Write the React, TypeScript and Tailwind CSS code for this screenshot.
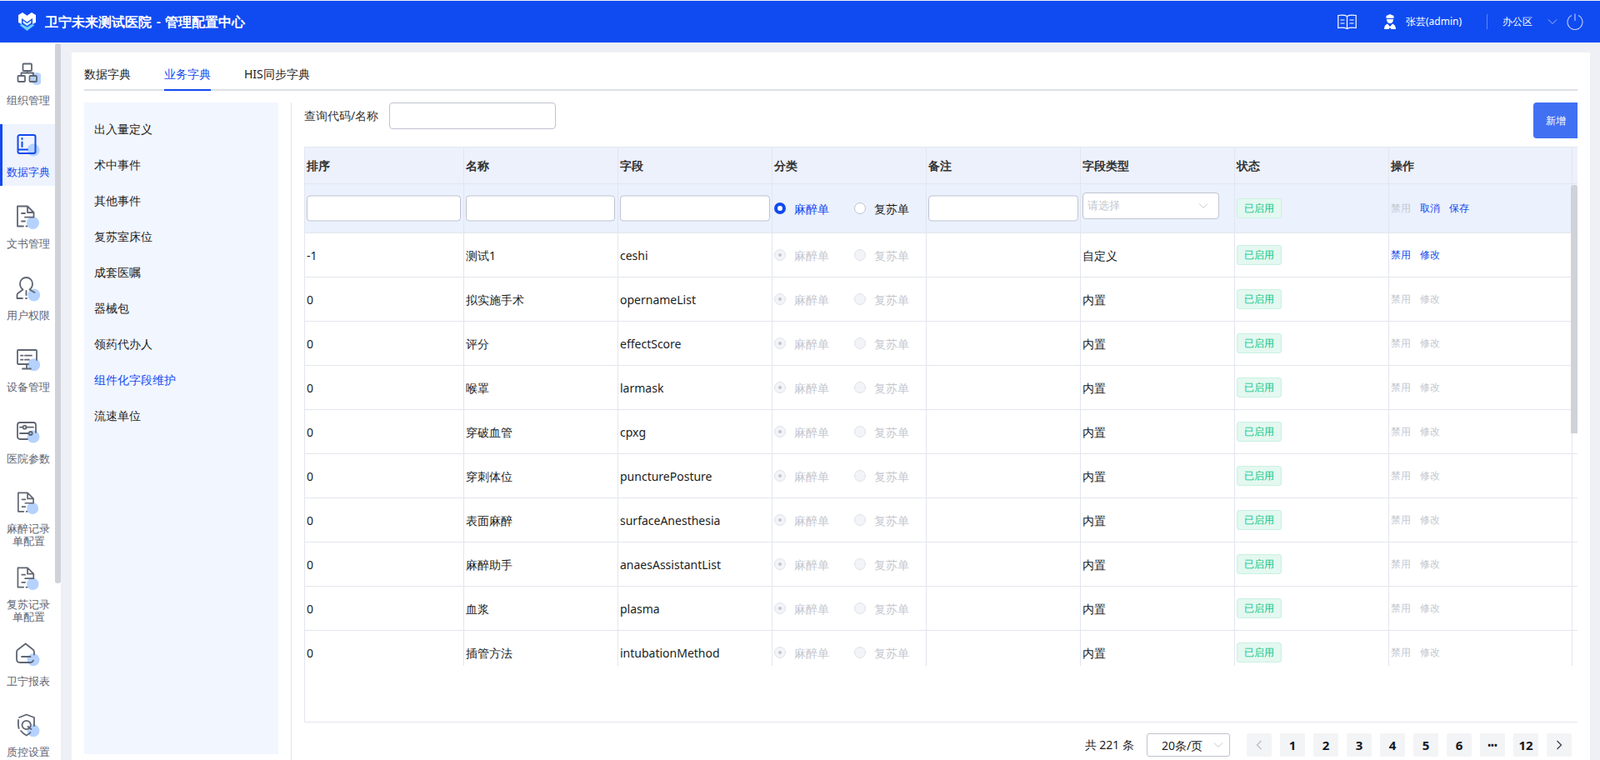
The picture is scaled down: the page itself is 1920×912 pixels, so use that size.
import React from "react";

const g = "#5f6673";
const blue = "#1249f0";

const IconBase = ({ children, cx = 21, cy = 21 }: any) => (
  <svg width="30" height="30" viewBox="0 0 30 30" fill="none" strokeWidth="1.800" strokeLinecap="round" strokeLinejoin="round" stroke={g}>
    <circle cx={cx} cy={cy} r="7.500" fill="#b5d2fe" stroke="none" />
    {children}
  </svg>
);

const OrgIcon = () => (
  <IconBase cx={25} cy={20.500}>
    <rect x="8.500" y="2.500" width="10.500" height="8.500" rx="1" />
    <rect x="2.500" y="17" width="8.500" height="7" rx="1" />
    <rect x="16.500" y="17" width="8.500" height="7" rx="1" />
    <path d="M13.700 11v2.500M6.500 17v-3.500h14.500V17" />
  </IconBase>
);
const BookIcon = () => (
  <IconBase cx={21} cy={20}>
    <path stroke={blue} strokeWidth="2" d="M2.500 4a2 2 0 0 1 2-2h17a2 2 0 0 1 2 2v18a2 2 0 0 1-2 2h-17a2 2 0 0 1-2-2zM2.500 19.500H14M7.500 6v1M7.500 10.500V16" />
  </IconBase>
);
const DocIcon = () => (
  <IconBase cx={20.500} cy={21.500}>
    <path d="M9 25.500H2V1.500h12l7.500 7.500v5.500M14 1.500V9h7.500M7 10h4M11 14.700h10.500M7 19.500h4M12.500 25.500h1" />
  </IconBase>
);
const UserIcon = () => (
  <IconBase cx={21.700} cy={22}>
    <path d="M8.500 15.500C6 13.500 5 11 5 8.500a7.500 7.500 0 0 1 15 0c0 2.500-1 5-3.500 7l6 3.500M8.500 15.500 2.500 20c-.8.600-1 1.200-1 2v4H8M12.500 17v5M12 26h1" />
  </IconBase>
);
const MonitorIcon = () => (
  <IconBase cx={21.700} cy={19.700}>
    <path d="M15 19H3a1 1 0 0 1-1-1V3a1 1 0 0 1 1-1h21a1 1 0 0 1 1 1v11M6 8.700h2.500M11 8.700h8M6 13.700h2.500M11 13.700h5M13 19v5M8 24.500h10" />
  </IconBase>
);
const SliderIcon = () => (
  <IconBase cx={21} cy={20}>
    <path d="M14 23H5a3 3 0 0 1-3-3V6a3 3 0 0 1 3-3h16a3 3 0 0 1 3 3v9" />
    <path d="M5 8.700h3.500M12.500 8.700H21M5 16h10.500" />
    <circle cx="10.500" cy="8.700" r="2" />
    <circle cx="17.700" cy="16" r="2" />
  </IconBase>
);
const HomeIcon = () => (
  <IconBase cx={21} cy={20.700}>
    <path d="M11.700 1.500 2.500 8.500C1.500 9.200 1 10 1 11.500V20c0 2.500 1.500 4 4 4h12c2 0 3.500-1 4-2.500M11.700 1.500 20 8c1.500 1 2 2 2 3.500v3M7 17h10.500" />
  </IconBase>
);
const ShieldIcon = () => (
  <IconBase cx={21} cy={20.700}>
    <path d="M4 5 12.700 1.500 22 5v10M3 8v7c0 1 .3 2 .8 3M6 21c2 2.500 4 4 6.700 5.500 2-1 3.500-2 4.800-3.500" />
    <circle cx="12.700" cy="14" r="5.200" />
    <path d="m14.500 16 4 3" />
  </IconBase>
);

const navItems = [
  { label: ["组织管理"], icon: <OrgIcon />, h: "h-[74px]" },
  { label: ["数据字典"], icon: <BookIcon />, h: "h-[74px]", active: true },
  { label: ["文书管理"], icon: <DocIcon />, h: "h-[74px]" },
  { label: ["用户权限"], icon: <UserIcon />, h: "h-[74px]" },
  { label: ["设备管理"], icon: <MonitorIcon />, h: "h-[74px]" },
  { label: ["医院参数"], icon: <SliderIcon />, h: "h-[74px]" },
  { label: ["麻醉记录", "单配置"], icon: <DocIcon />, h: "h-[78px]" },
  { label: ["复苏记录", "单配置"], icon: <DocIcon />, h: "h-[79px]" },
  { label: ["卫宁报表"], icon: <HomeIcon />, h: "h-[73px]" },
  { label: ["质控设置"], icon: <ShieldIcon />, h: "h-[74px]" },
];

const dictItems = ["出入量定义", "术中事件", "其他事件", "复苏室床位", "成套医嘱", "器械包", "领药代办人", "组件化字段维护", "流速单位"];

const rows = [
  ["-1", "测试1", "ceshi", "自定义"],
  ["0", "拟实施手术", "opernameList", "内置"],
  ["0", "评分", "effectScore", "内置"],
  ["0", "喉罩", "larmask", "内置"],
  ["0", "穿破血管", "cpxg", "内置"],
  ["0", "穿刺体位", "puncturePosture", "内置"],
  ["0", "表面麻醉", "surfaceAnesthesia", "内置"],
  ["0", "麻醉助手", "anaesAssistantList", "内置"],
  ["0", "血浆", "plasma", "内置"],
  ["0", "插管方法", "intubationMethod", "内置"],
];

const cols = "grid grid-cols-[191px_185px_185px_185px_185px_185px_185px_220px]";
const cell = "flex items-center pl-[2px] border-r border-[#e3e6ee] min-w-0";

const Tag = () => (
  <span className="flex h-[24px] w-[54px] items-center justify-center rounded-[3px] border border-[#c9f1e1] bg-[#e3f8f0] text-[12px] text-[#08c687]">已启用</span>
);

const Radio = ({ state }: { state: "on" | "off" | "dis-on" | "dis-off" }) => {
  if (state === "on") return <span className="h-[14px] w-[14px] rounded-full border-[4px] border-[#1249f0] bg-white" />;
  if (state === "off") return <span className="h-[14px] w-[14px] rounded-full border border-[#c0c4d0] bg-white" />;
  return (
    <span className="flex h-[14px] w-[14px] items-center justify-center rounded-full border border-[#dfe2ea] bg-[#f3f4f8]">
      {state === "dis-on" && <span className="h-[4px] w-[4px] rounded-full bg-[#c2c5ce]" />}
    </span>
  );
};

const TextInput = ({ className }: { className: string }) => (
  <div className={`h-[31px] translate-y-[-0.5px] rounded-[4px] border border-[#bfc3d1] bg-white ${className}`} />
);

const Chevron = ({ color = "#c4c7d0", size = 12 }: { color?: string; size?: number }) => (
  <svg width={size} height={size} viewBox="0 0 12 12" fill="none" stroke={color} strokeWidth="1">
    <path d="M1 3.500 6 8.500 11 3.500" />
  </svg>
);

const Header = () => (
  <header className="mt-px flex h-[50px] shrink-0 items-center bg-[#104bf2] pl-[22px] text-white">
    <svg width="21" height="22" viewBox="0 0 21 22">
      <path d="M0 3 5 0l5.500 3.800L16 0l5 3v9l-4 2V7l-6.500 4.500L4 7v7l-4-2z" fill="#fff" />
      <path d="M1.500 15 4.500 14l6 3.500 6-3.500 3 1-9 7z" fill="#6fd0fb" />
      <path d="M5.500 9.500l5 3.500 5-3.500v3l-5 3.500-5-3.500z" fill="#cfeeff" />
    </svg>
    <div className="ml-[11px] text-[16px] font-semibold [word-spacing:1.500px]">卫宁未来测试医院 - 管理配置中心</div>
    <div className="ml-auto flex items-center">
      <svg width="23" height="18" viewBox="0 0 23 18" fill="none" stroke="#fff" strokeWidth="1.200">
        <path d="M11.500 2.500C9 1 4 1 .8 1.500v15c3-.5 8-.5 10.700 1 2.700-1.500 7.700-1.500 10.700-1v-15C19 1 14 1 11.500 2.500zM11.500 2.500v15M3.500 7h5M3.500 11h5M14.500 7h5M14.500 11h5" />
      </svg>
      <svg className="ml-[33px]" width="14" height="18" viewBox="0 0 14 18" fill="#fff">
        <path d="M2.500 2 7 0l4.500 2v3h-9z" />
        <path d="M3 6h8c0 3-1.500 5-4 5S3 9 3 6z" />
        <path d="M0 18c0-3.500 1.500-5.500 4-6.500L7 15l3-3.500c2.500 1 4 3 4 6.500H8.500L7 16l-1.500 2z" />
      </svg>
      <span className="ml-[12px] text-[12px]">张芸(admin)</span>
      <span className="ml-[30px] h-[18px] w-px bg-[#5f86f6]" />
      <span className="ml-[18px] text-[12px]">办公区</span>
      <span className="ml-[18px]"><Chevron color="#a9bdfa" /></span>
      <svg className="ml-[11px] mr-[20px]" width="20" height="20" viewBox="0 0 20 20" fill="none" stroke="#c0cefb" strokeWidth="1.100">
        <path d="M6 2.500a9 9 0 1 0 8 0M10 .5V9" />
      </svg>
    </div>
  </header>
);

const Sidebar = () => (
  <aside className="relative w-[73px] shrink-0 overflow-hidden bg-white pt-3">
    <div className="flex w-[66px] flex-col gap-3">
      {navItems.map((item) => (
        <div
          key={item.label[0]}
          className={`flex flex-col items-center pl-[2px] pt-[11px] ${item.h} ${item.active ? "bg-[#eef3fe] text-[#1249f0] shadow-[inset_3px_0_0_#1249f0]" : "text-[#5f6673]"}`}
        >
          {item.icon}
          <div className="mt-[9px] text-center text-[13px] leading-[15px] whitespace-nowrap">
            {item.label.map((l) => (
              <div key={l}>{l}</div>
            ))}
          </div>
        </div>
      ))}
    </div>
    <div className="absolute right-0 top-[1px] h-[648px] w-[7px] rounded-[3px] bg-[#d0d2da]" />
  </aside>
);

const Table = () => (
  <div className="relative h-[691px] border-b border-l border-[#e3e6ee]">
    <div className="flex h-[45px] border-y border-[#e3e6ee] bg-[#edf1fb] text-[14px] font-semibold text-[#333]">
      <div className={`${cols} h-full`}>
        {["排序", "名称", "字段", "分类", "备注", "字段类型", "状态", "操作"].map((t) => (
          <div key={t} className={cell}>{t}</div>
        ))}
      </div>
      <div className="flex-1" />
    </div>
    <div className="h-[578px] overflow-hidden text-[14px] text-[#1c1c1c]">
      <div className={`${cols} h-[59px] border-b border-[#e3e6ee] bg-[#ebf1fd]`}>
        <div className={cell}><TextInput className="w-[185px]" /></div>
        <div className={cell}><TextInput className="w-[179px]" /></div>
        <div className={cell}><TextInput className="w-[180px]" /></div>
        <div className={cell}>
          <Radio state="on" />
          <span className="ml-[10px] text-[#1249f0]">麻醉单</span>
          <span className="ml-[30px] flex items-center"><Radio state="off" /><span className="ml-[10px]">复苏单</span></span>
        </div>
        <div className={cell}><TextInput className="w-[180px]" /></div>
        <div className={`${cell} items-start pt-[10px]`}>
          <div className="flex h-[32px] w-[164px] items-center justify-between rounded-[4px] border border-[#bfc3d1] bg-white pl-[5px] pr-[12px] text-[13px] text-[#c4c7d0]">
            请选择<Chevron />
          </div>
        </div>
        <div className={cell}><Tag /></div>
        <div className={`${cell} text-[12px]`}>
          <span className="text-[#c4c7d0]">禁用</span>
          <span className="ml-[11px] text-[#1249f0]">取消</span>
          <span className="ml-[11px] text-[#1249f0]">保存</span>
        </div>
      </div>
      {rows.map((r) => {
        const editable = r[0] === "-1";
        return (
          <div key={r[2]} className={`${cols} h-[53px] border-b border-[#e3e6ee]`}>
            <div className={cell}>{r[0]}</div>
            <div className={cell}>{r[1]}</div>
            <div className={cell}>{r[2]}</div>
            <div className={`${cell} text-[#c4c7d0]`}>
              <Radio state="dis-on" />
              <span className="ml-[10px]">麻醉单</span>
              <span className="ml-[30px] flex items-center"><Radio state="dis-off" /><span className="ml-[10px]">复苏单</span></span>
            </div>
            <div className={cell} />
            <div className={cell}>{r[3]}</div>
            <div className={cell}><Tag /></div>
            <div className={`${cell} text-[12px] ${editable ? "text-[#1249f0]" : "text-[#c4c7d0]"}`}>
              <span>禁用</span>
              <span className="ml-[11px]">修改</span>
            </div>
          </div>
        );
      })}
    </div>
    {/* table scrollbar */}
    <div className="absolute right-0 top-[46px] h-[298px] w-[8px] rounded-t-[3px] bg-[#d0d2da]" />
  </div>
);

const Pagination = () => {
  const btn = "flex h-[28px] w-[30px] items-center justify-center rounded-[2px] bg-[#f3f4f6]";
  return (
    <div className="flex h-[45px] items-end justify-end pb-[4px] pr-[7px] text-[14px] text-[#222]">
      <span className="mb-[4px]">共 221 条</span>
      <div className="ml-[15px] flex h-[28px] w-[100px] items-center justify-between rounded-[3px] border border-[#bfc3d1] pl-[17px] pr-[7px]">
        20条/页<Chevron />
      </div>
      <div className="ml-[20px] flex gap-[10px] font-['Roboto',sans-serif] text-[15px] font-bold text-[#111827]">
        <div className={btn}>
          <svg width="8" height="12" viewBox="0 0 8 12" fill="none" stroke="#bcc0ca" strokeWidth="1.500"><path d="M6.500 1 1.500 6l5 5" /></svg>
        </div>
        {["1", "2", "3", "4", "5", "6", "•••", "12"].map((p) => (
          <div key={p} className={`${btn} ${p === "•••" ? "text-[10px]" : ""}`}>{p}</div>
        ))}
        <div className={btn}>
          <svg width="8" height="12" viewBox="0 0 8 12" fill="none" stroke="#374151" strokeWidth="1.300"><path d="M1.500 1l5 5-5 5" /></svg>
        </div>
      </div>
    </div>
  );
};

export default function App() {
  return (
    <div className="flex h-[912px] w-[1920px] flex-col overflow-hidden bg-[#eef0f5] font-['Noto_Sans','Noto_Sans_CJK_SC',sans-serif]">
      <Header />
      <div className="flex min-h-0 flex-1">
        <Sidebar />
        <main className="min-w-0 flex-1 pl-[13px] pr-3 pt-3">
          <div className="h-full bg-white px-[15px]">
            <div className="flex h-[46px] gap-10 border-b-2 border-[#dcdfe6] pt-[15px] text-[14px] text-[#222]">
              <div className="h-[31px]">数据字典</div>
              <div className="h-[31px] border-b-2 border-[#1249f0] text-[#1249f0]">业务字典</div>
              <div className="h-[31px]">HIS同步字典</div>
            </div>
            <div className="flex pt-[14px]">
              <div className="h-[782px] w-[233px] shrink-0 bg-[#f2f6ff] pl-3 pt-[10px] text-[14px] text-[#1c1c1c]">
                {dictItems.map((d) => (
                  <div key={d} className={`flex h-[43px] items-center ${d === "组件化字段维护" ? "text-[#1249f0]" : ""}`}>{d}</div>
                ))}
              </div>
              <div className="ml-[15px] min-w-0 flex-1 border-l border-[#e3e6ee] pl-[15px]">
                <div className="flex h-[53px] items-start">
                  <span className="mt-[5px] text-[14px] text-[#333]">查询代码/名称</span>
                  <div className="ml-[13px] h-[32px] w-[200px] rounded-[4px] border border-[#bfc3d1]" />
                  <button className="ml-auto h-[43px] w-[53px] rounded-l-[4px] bg-[#4170f3] text-[12px] text-white">新增</button>
                </div>
                <Table />
                <Pagination />
              </div>
            </div>
          </div>
        </main>
      </div>
    </div>
  );
}
